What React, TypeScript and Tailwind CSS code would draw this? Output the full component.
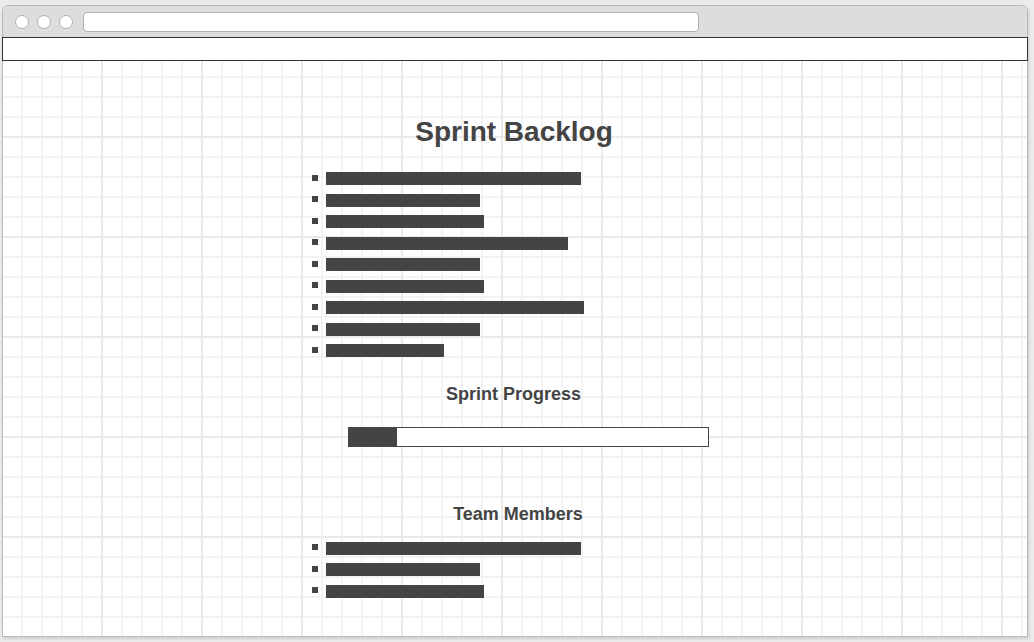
import * as React from 'react';

const backlog = [255, 154, 158, 242, 154, 158, 258, 154, 118];
const team = [255, 154, 158];

function BarList({ widths, className }: { widths: number[]; className?: string }) {
  return (
    <ul className={`ml-[309px] flex flex-col ${className ?? ''}`}>
      {widths.map((w, i) => (
        <li key={i} className="flex h-[21.5px] items-center gap-[8px]">
          <span className="h-[6px] w-[6px] -translate-y-[1px] bg-[#444444]" />
          {/* placeholder text line */}
          <span className="h-[13px] bg-[#444444]" style={{ width: w }} />
        </li>
      ))}
    </ul>
  );
}

export default function App() {
  return (
    <div className="h-[642px] w-[1034px] overflow-hidden bg-[#ebebeb] pl-[2px] pt-[5px] font-['Liberation_Sans',Arial,sans-serif] text-[#444444]">
      <div className="flex h-[632px] w-[1026px] flex-col rounded-t-[6px] border border-[#b8b8b8] bg-white shadow-[1px_2px_3px_rgba(0,0,0,0.12)]">
        {/* Browser chrome */}
        <div className="flex h-[31px] items-center rounded-t-[5px] bg-[#dddddd] pl-[12px]">
          <div className="flex gap-[8px]">
            <span className="h-[14px] w-[14px] rounded-full border border-[#b0b0b0] bg-white" />
            <span className="h-[14px] w-[14px] rounded-full border border-[#b0b0b0] bg-white" />
            <span className="h-[14px] w-[14px] rounded-full border border-[#b0b0b0] bg-white" />
          </div>
          <div className="ml-[10px] h-[20px] w-[616px] rounded-[4px] border border-[#b0b0b0] bg-white" />
        </div>
        <div className="-mx-px h-[24px] border border-[#333333] bg-white" />

        {/* Page body */}
        <div className="flex-1 overflow-hidden bg-[linear-gradient(to_right,#eaeaea_2px,transparent_2px),linear-gradient(to_bottom,#eaeaea_2px,transparent_2px),linear-gradient(to_right,#f3f3f3_2px,transparent_2px),linear-gradient(to_bottom,#f3f3f3_2px,transparent_2px)] bg-[size:100px_100px,100px_100px,20px_20px,20px_20px] bg-[position:98px_75px] pt-[55px]">
          <h1 className="pr-[2px] text-center text-[28px] font-bold leading-[32px]">Sprint Backlog</h1>
          <BarList widths={backlog} className="mt-[20px]" />

          <h2 className="mt-[21.5px] pr-[3px] text-center text-[18px] font-bold leading-[22px]">Sprint Progress</h2>
          <div className="ml-[345px] mt-[21.5px] h-[20px] w-[361px] border border-[#444444] bg-white">
            <div className="h-full w-[48px] bg-[#444444]" />
          </div>

          <h2 className="mt-[56px] pl-[6px] text-center text-[18px] font-bold leading-[22px]">Team Members</h2>
          <BarList widths={team} className="mt-[13px]" />
        </div>
      </div>
    </div>
  );
}
